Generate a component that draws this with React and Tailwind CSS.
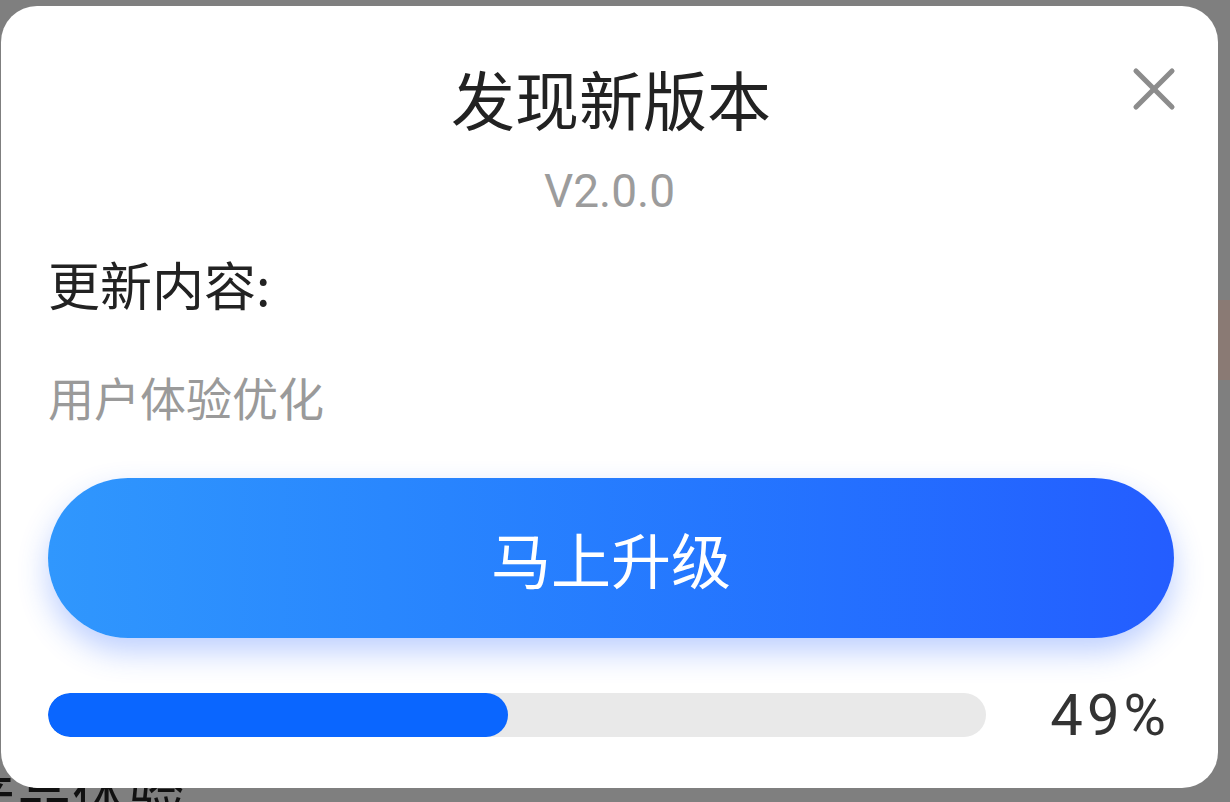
import { X } from 'lucide-react';

const cjk = { fontFamily: "'Noto Sans CJK SC', 'Noto Sans', sans-serif" };

function ProgressBar({ value }) {
  return (
    <div className="flex items-center mt-[48px]">
      <div className="w-[938px] h-[44px] rounded-full bg-[#e9e9e9] overflow-hidden">
        <div className="h-full rounded-full bg-[#0a66ff]" style={{ width: `${value}%` }} />
      </div>
      <div className="flex-1 text-right pr-[1px] text-[58px] leading-[58px] tracking-[4px] text-[#333]" style={{ fontFamily: "'Roboto', sans-serif" }}>
        {value}%
      </div>
    </div>
  );
}

export default function App() {
  return (
    <div className="w-[1230px] h-[802px] bg-[#7f7f7f] overflow-hidden relative" style={cjk}>
      <div className="absolute right-0 top-[300px] w-[12px] h-[80px] bg-[#8a7a74]" />
      <div className="absolute left-[-40px] top-[766px] text-[56px] leading-[56px] text-[#111]">产品体验</div>
      <div className="relative pt-[6px] pl-[1px]">
        <div className="w-[1217px] h-[782px] bg-white rounded-[36px] px-[47px] pt-[55px] relative">
          <button className="absolute right-[28px] top-[47px] text-[#8c8c8c]">
            <X size={72} strokeWidth={1.7} />
          </button>
          <h1 className="text-center text-[64px] leading-[72px] text-[#222] pl-[3px]">发现新版本</h1>
          <div className="text-center text-[46px] leading-[46px] mt-[35px] text-[#9c9c9c]" style={{ fontFamily: "'Roboto', sans-serif" }}>
            V2.0.0
          </div>
          <div className="text-[52px] leading-[60px] mt-[40px] text-[#222]">更新内容:</div>
          <div className="text-[46px] leading-[56px] mt-[54px] text-[#9a9a9a]">用户体验优化</div>
          <button className="mt-[54px] w-[1126px] h-[160px] rounded-full bg-gradient-to-r from-[#3097fd] to-[#245dff] text-white text-[60px] shadow-[0_14px_30px_rgba(40,100,255,0.3)]">
            马上升级
          </button>
          <ProgressBar value={49} />
        </div>
      </div>
    </div>
  );
}
